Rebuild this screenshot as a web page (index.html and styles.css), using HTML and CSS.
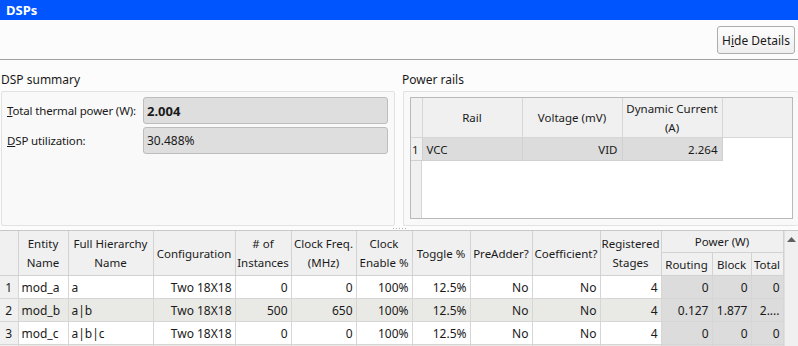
FILE: index.html
```html
<!DOCTYPE html>
<html lang="en">
<head>
    <meta charset="UTF-8">
    <title>DSPs</title>
    <link rel="stylesheet" href="styles.css">
</head>
<body>
    <div class="titlebar">DSPs</div>

    <div class="toolbar">
        <button class="btn">H<u>i</u>de Details</button>
    </div>

    <div class="summary">
        <div class="group group-left">
            <div class="group-label">DSP summary</div>
            <div class="group-box">
                <div class="field">
                    <label><u>T</u>otal thermal power (W):</label>
                    <div class="value bold">2.004</div>
                </div>
                <div class="field">
                    <label><u>D</u>SP utilization:</label>
                    <div class="value">30.488%</div>
                </div>
            </div>
        </div>
        <div class="group group-right">
            <div class="group-label">Power rails</div>
            <div class="group-box">
                <div class="rails-view">
                    <table class="rails">
                        <colgroup>
                            <col style="width:11px">
                            <col style="width:100px">
                            <col style="width:100px">
                            <col style="width:100px">
                            <col>
                        </colgroup>
                        <thead>
                            <tr>
                                <th></th>
                                <th>Rail</th>
                                <th>Voltage (mV)</th>
                                <th>Dynamic Current<br>(A)</th>
                                <th class="blank-head"></th>
                            </tr>
                        </thead>
                        <tbody>
                            <tr class="sel">
                                <td class="num">1</td>
                                <td class="left">VCC</td>
                                <td>VID</td>
                                <td>2.264</td>
                                <td class="empty"></td>
                            </tr>
                        </tbody>
                    </table>
                    <div class="rails-fill"></div>
                </div>
            </div>
        </div>
    </div>

    <div class="splitter"><span class="grip"></span></div>

    <div class="grid-wrap">
        <table class="grid">
            <colgroup>
                <col style="width:18px">
                <col style="width:50px">
                <col style="width:85px">
                <col style="width:82px">
                <col style="width:56px">
                <col style="width:65px">
                <col style="width:56px">
                <col style="width:58px">
                <col style="width:62px">
                <col style="width:68px">
                <col style="width:61px">
                <col style="width:51px">
                <col style="width:39px">
                <col style="width:32px">
            </colgroup>
            <thead>
                <tr class="head-top">
                    <th rowspan="2"></th>
                    <th rowspan="2">Entity<br>Name</th>
                    <th rowspan="2">Full Hierarchy<br>Name</th>
                    <th rowspan="2">Configuration</th>
                    <th rowspan="2"># of<br>Instances</th>
                    <th rowspan="2">Clock Freq.<br>(MHz)</th>
                    <th rowspan="2">Clock<br>Enable %</th>
                    <th rowspan="2">Toggle %</th>
                    <th rowspan="2">PreAdder?</th>
                    <th rowspan="2">Coefficient?</th>
                    <th rowspan="2">Registered<br>Stages</th>
                    <th colspan="3" class="group-head">Power (W)</th>
                </tr>
                <tr class="head-sub">
                    <th>Routing</th>
                    <th>Block</th>
                    <th>Total</th>
                </tr>
            </thead>
            <tbody>
                <tr>
                    <td class="num">1</td>
                    <td class="left">mod_a</td>
                    <td class="left">a</td>
                    <td>Two 18X18</td>
                    <td>0</td>
                    <td>0</td>
                    <td>100%</td>
                    <td>12.5%</td>
                    <td>No</td>
                    <td>No</td>
                    <td>4</td>
                    <td class="ro">0</td>
                    <td class="ro">0</td>
                    <td class="ro">0</td>
                </tr>
                <tr class="alt">
                    <td class="num">2</td>
                    <td class="left">mod_b</td>
                    <td class="left">a|b</td>
                    <td>Two 18X18</td>
                    <td>500</td>
                    <td>650</td>
                    <td>100%</td>
                    <td>12.5%</td>
                    <td>No</td>
                    <td>No</td>
                    <td>4</td>
                    <td class="ro">0.127</td>
                    <td class="ro">1.877</td>
                    <td class="ro">2....</td>
                </tr>
                <tr>
                    <td class="num">3</td>
                    <td class="left">mod_c</td>
                    <td class="left">a|b|c</td>
                    <td>Two 18X18</td>
                    <td>0</td>
                    <td>0</td>
                    <td>100%</td>
                    <td>12.5%</td>
                    <td>No</td>
                    <td>No</td>
                    <td>4</td>
                    <td class="ro">0</td>
                    <td class="ro">0</td>
                    <td class="ro">0</td>
                </tr>
                <tr class="alt">
                    <td class="num">&nbsp;</td>
                    <td class="left"></td>
                    <td class="left"></td>
                    <td></td>
                    <td></td>
                    <td></td>
                    <td></td>
                    <td></td>
                    <td></td>
                    <td></td>
                    <td></td>
                    <td class="ro"></td>
                    <td class="ro"></td>
                    <td class="ro"></td>
                </tr>
            </tbody>
        </table>
        <div class="vscroll">
            <div class="arrow-up">
                <svg width="9" height="5" viewBox="0 0 9 5"><polygon points="0,5 9,5 4.5,0" fill="#606060"/></svg>
            </div>
        </div>
    </div>
</body>
</html>
```

FILE: styles.css
```css
html, body {
    margin: 0;
    padding: 0;
}
body {
    width: 798px;
    height: 346px;
    overflow: hidden;
    background: #fcfcfc;
    color: #1a1a1a;
    font-family: "Noto Sans", "Open Sans", sans-serif;
    font-size: 11.5px;
}
.titlebar {
    height: 20px;
    line-height: 20px;
    background: #0055ff;
    color: #fff;
    font-weight: bold;
    font-size: 13px;
    padding-left: 6px;
}
.toolbar {
    height: 40px;
    border-bottom: 1px solid #a0a0a0;
    display: flex;
    justify-content: flex-end;
    align-items: flex-start;
    box-sizing: border-box;
}
.btn {
    margin-top: 6px;
    margin-right: 3px;
    width: 78px;
    height: 28px;
    font-family: inherit;
    font-size: 12px;
    color: #1a1a1a;
    border: 1px solid #adadad;
    border-radius: 3px;
    background: linear-gradient(#fdfdfd, #efefef);
    padding: 0;
}
.summary {
    display: flex;
    height: 166px;
}
.group {
    display: flex;
    flex-direction: column;
}
.group-left {
    width: 395px;
    padding-left: 1px;
    box-sizing: border-box;
}
.group-right {
    flex: 1;
    padding-left: 8px;
}
.group-label {
    height: 31px;
    line-height: 20px;
    padding-top: 10px;
    box-sizing: border-box;
    font-size: 12px;
}
.group-right .group-label {
    margin-left: -1px;
}
.group-box {
    flex: 1;
    border: 1px solid #e2e2e2;
    border-radius: 2px;
    background: #f9f9f9;
    box-sizing: border-box;
}
.group-left .group-box {
    padding: 5px 6px 0 5px;
}
.group-right .group-box {
    padding: 5px 5px 6px 6px;
    display: flex;
    border-right: none;
}
.field {
    display: flex;
    align-items: center;
    margin-bottom: 3px;
}
.field label {
    width: 136px;
    flex: none;
    white-space: nowrap;
    font-size: 11.5px;
    letter-spacing: -0.15px;
}
.value {
    flex: 1;
    height: 27px;
    line-height: 26px;
    box-sizing: border-box;
    background: #dedede;
    border: 1px solid #bdbdbd;
    border-radius: 3px;
    padding-left: 3px;
    font-size: 12px;
}
.value.bold {
    font-weight: bold;
    font-size: 13px;
}
.rails-view {
    flex: 1;
    border: 1px solid #b9b9b9;
    background: #fff;
    display: flex;
    flex-direction: column;
}
.rails {
    border-collapse: collapse;
    table-layout: fixed;
    width: 100%;
}
.rails th {
    height: 39px;
    background: #f0f0f0;
    font-weight: normal;
    border-right: 1px solid #d6d6d6;
    border-bottom: 1px solid #d6d6d6;
    line-height: 19px;
    padding: 0;
}
.rails th.blank-head {
    border-right: none;
}
.rails td {
    height: 22px;
    padding: 0 4px;
    text-align: right;
    border-right: 1px solid #d0d0d0;
    border-bottom: 1px solid #d0d0d0;
    white-space: nowrap;
}
.rails tr.sel td {
    background: #dcdcdc;
}
.rails tr.sel td.num {
    background: #f0f0f0;
    padding: 0 0 0 1px;
    text-align: left;
}
.rails tr.sel td.empty {
    background: #fff;
    border: none;
}
.rails td.left {
    text-align: left;
}
.rails-fill {
    flex: 1;
    background: linear-gradient(to right, #f0f0f0 0, #f0f0f0 10px, #d6d6d6 10px, #d6d6d6 11px, #fff 11px);
}
.splitter {
    height: 4px;
    display: flex;
    justify-content: center;
    align-items: center;
}
.grip {
    width: 14px;
    height: 1px;
    margin-left: 2px;
    background: repeating-linear-gradient(to right, #b0b0b0 0, #b0b0b0 1px, transparent 1px, transparent 3px);
}
.grid-wrap {
    display: flex;
    border-top: 1px solid #c8c8c8;
}
.grid {
    border-collapse: collapse;
    table-layout: fixed;
    width: 783px;
}
.grid th {
    font-weight: normal;
    background: #f0f0f0;
    border-right: 1px solid #d2d2d2;
    border-bottom: 1px solid #d2d2d2;
    line-height: 19px;
    padding: 0;
    white-space: nowrap;
    overflow: hidden;
}
.grid .head-top th {
    height: 21px;
}
.grid .head-sub th {
    height: 21px;
    vertical-align: bottom;
    padding-bottom: 1px;
}
.grid th.group-head {
    vertical-align: middle;
}
.grid td {
    height: 22px;
    padding: 0 3px;
    text-align: right;
    background: #fff;
    border-right: 1px solid #d6d6d6;
    border-bottom: 1px solid #d6d6d6;
    white-space: nowrap;
    overflow: hidden;
    font-size: 12px;
}
.grid tr.alt td {
    background: #e9e9e5;
}
.grid td.left {
    text-align: left;
}
.grid td.num,
.grid tr.alt td.num {
    background: #f0f0f0;
    text-align: center;
    padding: 0;
}
.grid td.ro,
.grid tr.alt td.ro {
    background: #dcdcdc;
}
.vscroll {
    width: 15px;
    background: #f0f0f0;
    border-left: 1px solid #e0e0e0;
}
.arrow-up {
    height: 16px;
    display: flex;
    justify-content: center;
    align-items: center;
}
```
